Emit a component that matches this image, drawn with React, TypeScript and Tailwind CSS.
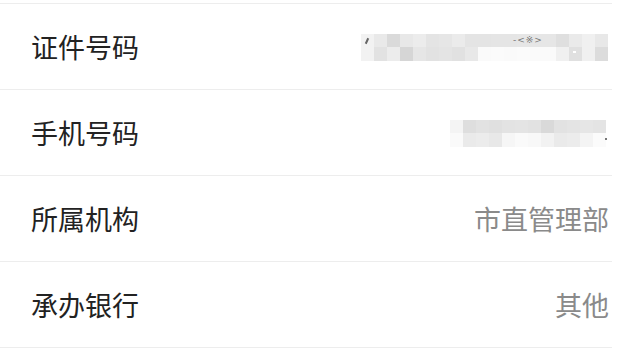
import React from 'react';

// mosaic cells used to mask private values (two rows of pixelated blocks)
const idTop = [
  'bg-[#f2f2f2]', 'bg-[#e9e9e9]', 'bg-[#dadada]', 'bg-[#e8e8e8]', 'bg-[#ececec]', 'bg-[#e4e4e4]', 'bg-[#e6e6e6]', 'bg-[#ebebeb]',
  'bg-[#e4e4e4]', 'bg-[#e4e4e4]', 'bg-[#e5e5e5]', 'bg-[#e5e5e5]', 'bg-[#e6e6e6]', 'bg-[#e6e6e6]', 'bg-[#e6e6e6]',
  'bg-[#dfdfdf]', 'bg-[#eaeaea]', 'bg-[#f0f0f0]', 'bg-[#e8e8e8]',
];
const idBottom = [
  'bg-[#f2f2f2]', 'bg-[#e2e2e2]', 'bg-[#ececec]', 'bg-[#d6d6d6]', 'bg-[#e6e6e6]', 'bg-[#e2e2e2]', 'bg-[#e4e4e4]', 'bg-[#e1e1e1]', 'bg-[#e8e8e8]',
  'bg-[#fafafa]', 'bg-[#fbfbfb]', 'bg-[#fafafa]', 'bg-[#fbfbfb]', 'bg-[#fafafa]', 'bg-[#fafafa]',
  'bg-[#f0f0f0]', 'bg-[#e0e0e0]', 'bg-[#f0f0f0]', 'bg-[#dcdcdc]',
];
const phoneTop = [
  'bg-[#f4f4f4]', 'bg-[#dedede]', 'bg-[#e2e2e2]', 'bg-[#e0e0e0]', 'bg-[#e3e3e3]', 'bg-[#e4e4e4]', 'bg-[#e2e2e2]',
  'bg-[#d9d9d9]', 'bg-[#e2e2e2]', 'bg-[#e4e4e4]', 'bg-[#e6e6e6]', 'bg-[#e4e4e4]',
];
const phoneBottom = [
  'bg-[#fafafa]', 'bg-[#eaeaea]', 'bg-[#ececec]', 'bg-[#e8e8e8]', 'bg-[#f6f6f6]', 'bg-[#fafafa]', 'bg-[#f8f8f8]',
  'bg-[#f2f2f2]', 'bg-[#eaeaea]', 'bg-[#ececec]', 'bg-[#f4f4f4]', 'bg-[#fbfbfb]',
];

const Mosaic: React.FC<{ top: string[]; bottom: string[]; children?: React.ReactNode }> = ({ top, bottom, children }) => (
  <div className="relative flex flex-col">
    <div className="flex blur-[0.6px]">
      {top.map((c, i) => (
        <div key={i} className={`h-[13px] w-[13px] ${c}`} />
      ))}
    </div>
    <div className="flex blur-[0.6px]">
      {bottom.map((c, i) => (
        <div key={i} className={`h-[14px] w-[13px] ${c}`} />
      ))}
    </div>
    {children}
  </div>
);

const Row: React.FC<{ label: string; children: React.ReactNode }> = ({ label, children }) => (
  <div className="flex flex-col">
    <div className="h-px w-[612px] bg-[#ededed]" />
    <div className="flex h-[85px] items-center justify-between pl-[31px] pr-[31px]">
      <span className="text-[27px] leading-none text-[#222]">{label}</span>
      {children}
    </div>
  </div>
);

export default function App() {
  return (
    <div
      className="h-[360px] w-[640px] overflow-hidden bg-white pt-[3px]"
      style={{ fontFamily: '"Noto Sans CJK SC", "Noto Sans", sans-serif' }}
    >
      <Row label="证件号码">
        <div className="mr-[1px] pt-[1px]">
          <Mosaic top={idTop} bottom={idBottom}>
            {/* faint marks that survive the pixelation */}
            <span className="absolute left-[5px] top-[4px] h-[6px] w-[2px] rotate-[25deg] bg-[#666]" />
            <span
              className="absolute left-[152px] top-[2px] text-[9px] leading-none tracking-[1px] text-[#777]"
              style={{ fontFamily: '"DejaVu Sans", sans-serif' }}
            >
              -&lt;※&gt;
            </span>
            <span className="absolute left-[212px] top-[17px] h-[2px] w-[3px] bg-white" />
          </Mosaic>
        </div>
      </Row>
      <Row label="手机号码">
        <div className="mr-[3px] pt-[2px]">
          <Mosaic top={phoneTop} bottom={phoneBottom}>
            <span className="absolute right-[-1px] top-[18px] h-[2px] w-[2px] bg-[#777]" />
          </Mosaic>
        </div>
      </Row>
      <Row label="所属机构">
        <span className="text-[27px] leading-none text-[#8a8a8a]">市直管理部</span>
      </Row>
      <Row label="承办银行">
        <span className="text-[27px] leading-none text-[#8a8a8a]">其他</span>
      </Row>
      <div className="h-px w-[612px] bg-[#ededed]" />
    </div>
  );
}
